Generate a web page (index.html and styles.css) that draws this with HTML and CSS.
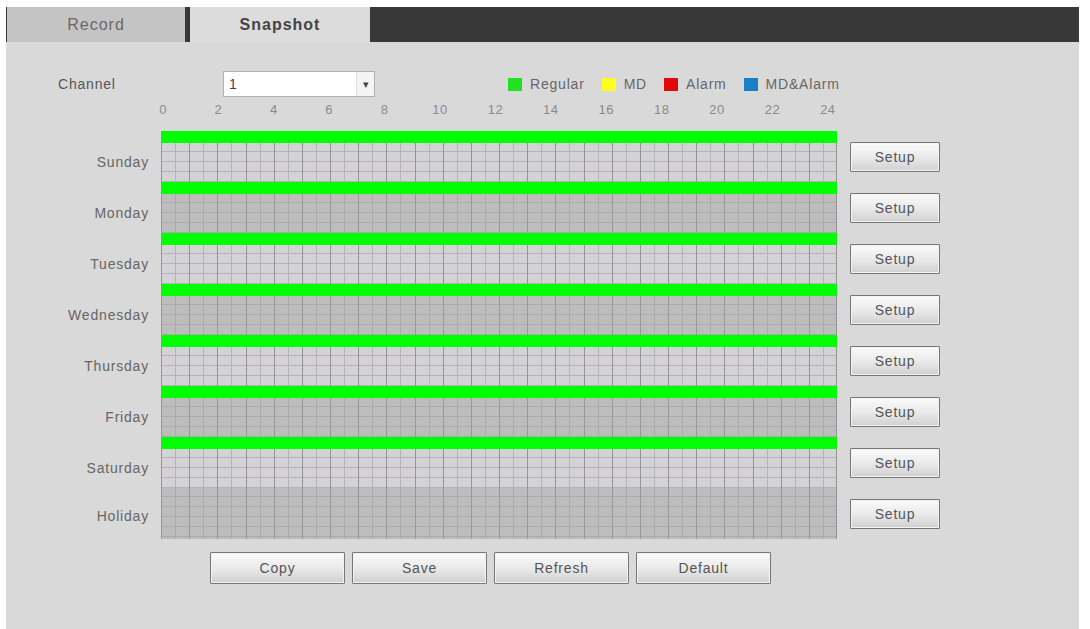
FILE: index.html
```html
<!DOCTYPE html>
<html lang="en">
<head>
    <meta charset="UTF-8">
    <title>Snapshot Schedule</title>
    <link rel="stylesheet" href="styles.css">
</head>
<body>
    <div class="page">
        <div class="tabs">
            <div class="tab">Record</div>
            <div class="tab active">Snapshot</div>
        </div>

        <div class="toolbar">
            <span class="channel-label">Channel</span>
            <div class="select">
                <span class="select-value">1</span>
                <span class="select-arrow">&#9662;</span>
            </div>
            <div class="legend">
                <span class="swatch regular"></span><span>Regular</span>
                <span class="swatch md"></span><span>MD</span>
                <span class="swatch alarm"></span><span>Alarm</span>
                <span class="swatch mdalarm"></span><span>MD&amp;Alarm</span>
            </div>
        </div>

        <div class="schedule">
            <div class="hours">
                <span>0</span><span>2</span><span>4</span><span>6</span><span>8</span><span>10</span><span>12</span>
                <span>14</span><span>16</span><span>18</span><span>20</span><span>22</span><span>24</span>
            </div>

            <div class="day light"><span class="day-label">Sunday</span><div class="timeline"><div class="bar"></div><div class="cells"></div></div><button class="btn setup">Setup</button></div>
            <div class="day dark"><span class="day-label">Monday</span><div class="timeline"><div class="bar"></div><div class="cells"></div></div><button class="btn setup">Setup</button></div>
            <div class="day light"><span class="day-label">Tuesday</span><div class="timeline"><div class="bar"></div><div class="cells"></div></div><button class="btn setup">Setup</button></div>
            <div class="day dark"><span class="day-label">Wednesday</span><div class="timeline"><div class="bar"></div><div class="cells"></div></div><button class="btn setup">Setup</button></div>
            <div class="day light"><span class="day-label">Thursday</span><div class="timeline"><div class="bar"></div><div class="cells"></div></div><button class="btn setup">Setup</button></div>
            <div class="day dark"><span class="day-label">Friday</span><div class="timeline"><div class="bar"></div><div class="cells"></div></div><button class="btn setup">Setup</button></div>
            <div class="day light"><span class="day-label">Saturday</span><div class="timeline"><div class="bar"></div><div class="cells"></div></div><button class="btn setup">Setup</button></div>
            <div class="day dark holiday"><span class="day-label">Holiday</span><div class="timeline"><div class="cells"></div></div><button class="btn setup">Setup</button></div>
        </div>

        <div class="actions">
            <button class="btn wide">Copy</button>
            <button class="btn wide">Save</button>
            <button class="btn wide">Refresh</button>
            <button class="btn wide">Default</button>
        </div>
    </div>
</body>
</html>
```

FILE: styles.css
```css
body {
    margin: 0;
    background-color: #ffffff;
    font-family: 'Liberation Sans', Arial, sans-serif;
    font-size: 14px;
    letter-spacing: 0.8px;
    color: #555;
}

.page {
    margin: 7px 0 0 6px;
    width: 1073px;
    height: 622px;
    background-color: #d9d9d9;
}

/* tabs */
.tabs {
    display: flex;
    height: 35px;
    background-color: #383838;
    gap: 5px;
    padding-left: 1px;
}

.tab {
    width: 178px;
    display: flex;
    align-items: center;
    justify-content: center;
    background-color: #c4c4c4;
    color: #6a6a6a;
    font-size: 16px;
    letter-spacing: 1px;
}

.tab.active {
    width: 180px;
    background-color: #dcdcdc;
    color: #444;
    font-weight: bold;
}

/* channel + legend */
.toolbar {
    display: flex;
    align-items: center;
    height: 26px;
    margin-top: 29px;
    padding-left: 52px;
}

.channel-label {
    width: 165px;
    color: #555;
}

.select {
    width: 150px;
    height: 24px;
    display: flex;
    background-color: #fff;
    border: 1px solid #b0b0b0;
}

.select-value {
    flex: 1;
    padding-left: 5px;
    line-height: 24px;
    color: #444;
}

.select-arrow {
    width: 17px;
    border-left: 1px solid #ddd;
    background-color: #f4f4f4;
    text-align: center;
    line-height: 24px;
    font-size: 11px;
    letter-spacing: 0;
    color: #444;
}

.legend {
    display: flex;
    align-items: center;
    margin-left: 133px;
    color: #666;
}

.legend span:not(.swatch) {
    margin-right: 17px;
}

.swatch {
    width: 14px;
    height: 13px;
    margin-right: 8px;
}

.swatch.regular { background-color: #22e022; }
.swatch.md { background-color: #ffff22; }
.swatch.alarm { background-color: #e00a0a; }
.swatch.mdalarm { background-color: #1b7fc4; }

/* schedule grid */
.schedule {
    margin-top: 2px;
}

.hours {
    display: flex;
    justify-content: space-between;
    height: 20px;
    align-items: center;
    margin: 0 0 12px 151px;
    width: 677px;
    font-size: 13px;
    letter-spacing: 0.5px;
    color: #8a8a8a;
}

.hours span {
    width: 12px;
    display: flex;
    justify-content: center;
}

.day {
    display: grid;
    grid-template-columns: 143px 676px 90px;
    column-gap: 12px;
    height: 51px;
    align-items: center;
}

.day .setup {
    margin-left: 1px;
}

.day-label {
    justify-self: end;
    align-self: end;
    margin-bottom: 12px;
    color: #666;
}

.timeline {
    height: 51px;
    display: flex;
    flex-direction: column;
}

.bar {
    height: 12px;
    background-color: #00ff00;
}

.cells {
    flex: 1;
    background-color: #d3d3d6;
    background-image:
        repeating-linear-gradient(to right, #939398 0 1px, transparent 1px calc(676px / 24)),
        repeating-linear-gradient(to right, transparent 0 calc(676px / 48), #b4b4ba calc(676px / 48) calc(676px / 48 + 1px), transparent calc(676px / 48 + 1px) calc(676px / 24)),
        repeating-linear-gradient(to bottom, transparent 0 8px, #b8b0c2 8px 9px, transparent 9px 10px);
    border-right: 1px solid #939398;
}

.day.dark .cells {
    background-color: #bdbdbd;
    background-image:
        repeating-linear-gradient(to right, #989898 0 1px, transparent 1px calc(676px / 24)),
        repeating-linear-gradient(to right, transparent 0 calc(676px / 48), #aaaaaa calc(676px / 48) calc(676px / 48 + 1px), transparent calc(676px / 48 + 1px) calc(676px / 24)),
        repeating-linear-gradient(to bottom, transparent 0 8px, #ababaf 8px 9px, transparent 9px 10px);
}

.holiday .cells {
    background-color: #b9b9b9;
}

.holiday .day-label {
    margin-bottom: 15px;
}

/* buttons */
.btn {
    font-family: 'Liberation Sans', Arial, sans-serif;
    font-size: 14px;
    letter-spacing: 0.8px;
    color: #555;
    border: 1px solid #777;
    border-radius: 1px;
    background: linear-gradient(to bottom, #fbfbfb 0%, #eaeaea 50%, #d0d0d0 100%);
    box-shadow: inset 0 0 0 1px #f2f2f2;
    padding: 0;
}

.setup {
    width: 90px;
    height: 30px;
}

.actions {
    display: flex;
    gap: 7px;
    margin: 13px 0 0 204px;
}

.wide {
    width: 135px;
    height: 32px;
}
```
